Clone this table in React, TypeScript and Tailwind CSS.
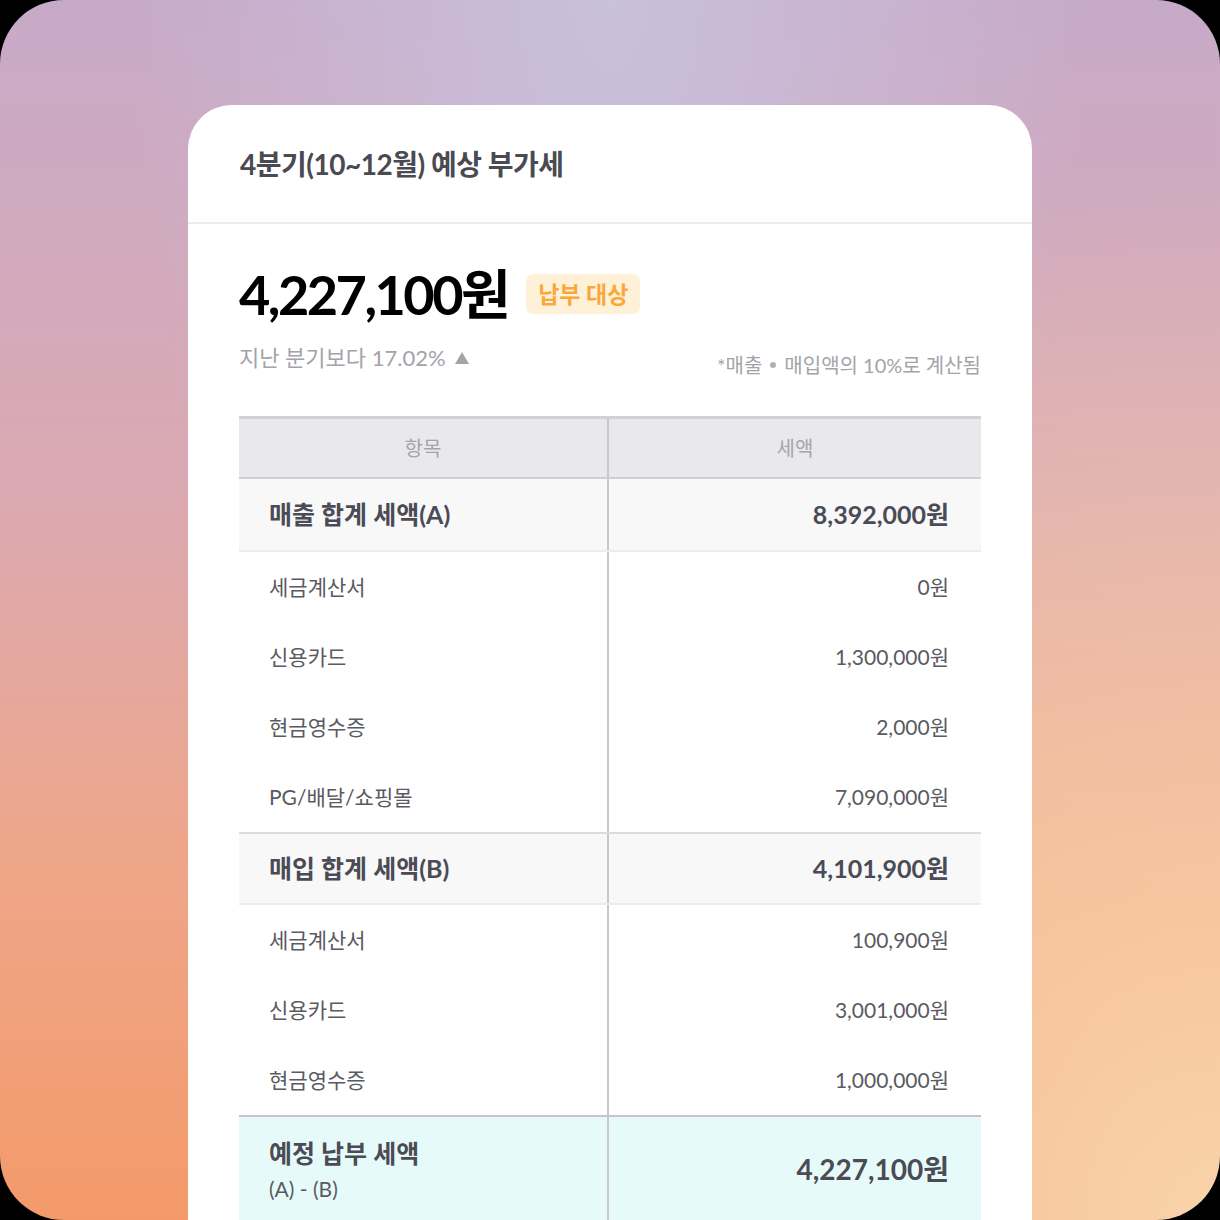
const rowsA = [
  { label: "세금계산서", value: "0원" },
  { label: "신용카드", value: "1,300,000원" },
  { label: "현금영수증", value: "2,000원" },
  { label: "PG/배달/쇼핑몰", value: "7,090,000원" },
];

const rowsB = [
  { label: "세금계산서", value: "100,900원" },
  { label: "신용카드", value: "3,001,000원" },
  { label: "현금영수증", value: "1,000,000원" },
];

function SumRow({ label, value, top }: { label: string; value: string; top?: boolean }) {
  return (
    <div
      className={`grid grid-cols-[370px_1fr] h-[73px] bg-[#f8f8f9] border-b-2 border-b-[#ececee] ${
        top ? "border-t-2 border-t-[#dcdcdf]" : ""
      }`}
    >
      <div className="flex items-center pl-[30px] border-r-2 border-[#c8c8cc] text-[25px] font-bold text-[#4b4b55]">
        {label}
      </div>
      <div className="flex items-center justify-end pr-[32px] text-[25px] font-bold text-[#4b4b55]">
        {value}
      </div>
    </div>
  );
}

function DetailRow({ label, value }: { label: string; value: string }) {
  return (
    <div className="grid grid-cols-[370px_1fr] h-[70px]">
      <div className="flex items-center pl-[30px] border-r-2 border-[#c8c8cc] text-[21px] text-[#5a5a62]">
        {label}
      </div>
      <div className="flex items-center justify-end pr-[32px] text-[21px] text-[#5a5a62]">
        {value}
      </div>
    </div>
  );
}

export default function App() {
  return (
    <div className="w-[1220px] h-[1220px] bg-black overflow-hidden font-['Lato','Noto_Sans_CJK_KR',sans-serif]">
      <div className="w-full h-full rounded-[64px] overflow-hidden pt-[105px] px-[188px] bg-[radial-gradient(ellipse_at_100%_100%,#f9d4ac_0%,rgba(249,212,172,0)_60%),radial-gradient(ellipse_at_50%_0%,#c9c0dc_0%,rgba(201,192,220,0)_55%),linear-gradient(to_bottom,#c7aac8_0%,#dba9b2_40%,#eea68a_70%,#f49a6a_100%)]">
        <div className="bg-white rounded-t-[44px] h-[1200px]">
          {/* header */}
          <div className="h-[119px] flex items-center px-[52px] border-b-2 border-[#ececee]">
            <h1 className="text-[28px] font-bold text-[#4a4a52] tracking-[-0.5px]">4분기(10~12월) 예상 부가세</h1>
          </div>

          <div className="px-[51px] pt-[38px]">
            {/* amount */}
            <div className="flex items-center gap-[18px] h-[64px]">
              <span className="text-[54px] font-bold text-black tracking-[-2.5px]">4,227,100원</span>
              <span className="px-[12px] h-[40px] flex items-center rounded-[7px] bg-[#fff0d8] text-[#f8a93b] text-[23px] font-bold">
                납부 대상
              </span>
            </div>

            <div className="flex justify-between items-start mt-[15px] h-[40px]">
              <span className="text-[22px] text-[#a3a3a8] flex items-center gap-[8px]">
                지난 분기보다 17.02%
                <svg width="16" height="14" viewBox="0 0 16 14"><path d="M8 1 L15 13 L1 13 Z" fill="#a3a3a8" /></svg>
              </span>
              <span className="text-[20px] text-[#a3a3a8] mt-[9px] flex items-center gap-[8px]">
                *매출
                <span className="w-[6px] h-[6px] rounded-full bg-[#b0b0b4]" />
                매입액의 10%로 계산됨
              </span>
            </div>

            {/* table */}
            <div className="mt-[35px] border-t-[3px] border-[#d2d2d5]">
              <div className="grid grid-cols-[370px_1fr] h-[60px] bg-[#e9e9eb] border-b-2 border-[#cfcfd2]">
                <div className="flex items-center justify-center border-r-2 border-[#c8c8cc] text-[20px] text-[#a5a5aa]">항목</div>
                <div className="flex items-center justify-center text-[20px] text-[#a5a5aa]">세액</div>
              </div>

              <SumRow label="매출 합계 세액(A)" value="8,392,000원" />
              {rowsA.map((r) => (
                <DetailRow key={r.label + r.value} label={r.label} value={r.value} />
              ))}
              <SumRow label="매입 합계 세액(B)" value="4,101,900원" top />
              {rowsB.map((r) => (
                <DetailRow key={r.label + r.value} label={r.label} value={r.value} />
              ))}

              <div className="grid grid-cols-[370px_1fr] h-[200px] bg-[#e6fbf9] border-t-2 border-[#c6c6ca]">
                <div className="pl-[30px] pt-[18px] border-r-2 border-[#c8c8cc]">
                  <div className="text-[25px] font-bold text-[#4b4b55] leading-[36px]">예정 납부 세액</div>
                  <div className="text-[21px] text-[#5a5a62] leading-[36px]">(A) - (B)</div>
                </div>
                <div className="flex justify-end pr-[32px] pt-[32px] text-[28px] font-bold text-[#4b4b55]">
                  <span className="leading-[40px]">4,227,100원</span>
                </div>
              </div>
            </div>
          </div>
        </div>
      </div>
    </div>
  );
}
